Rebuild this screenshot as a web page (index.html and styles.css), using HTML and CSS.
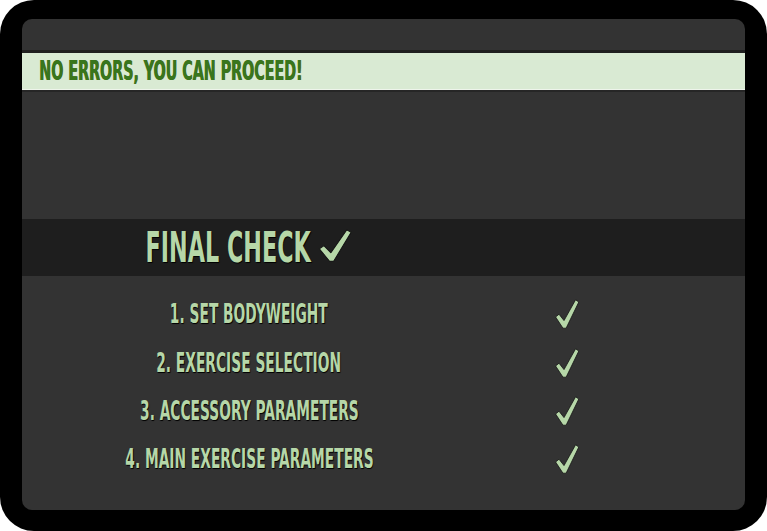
FILE: index.html
```html
<!DOCTYPE html>
<html lang="en">
<head>
  <meta charset="UTF-8">
  <title>Final Check</title>
  <link rel="stylesheet" href="styles.css">
</head>
<body>
  <div class="frame">
    <div class="panel">
      <div class="notice"><span class="squeeze">No errors, you can proceed!</span></div>

      <div class="final-head">
        <h2 class="title">
          <span>Final check</span>
          <svg class="tick tick-big" viewBox="0 0 24 30" preserveAspectRatio="none"><path d="M0.6 18 L4 15.2 L9 21.6 L20.6 0.8 L23.8 3 L11.1 29.2 L8 29.2 Z"/></svg>
        </h2>
      </div>

      <div class="checklist">
        <div class="row">
          <span class="squeeze">1. Set bodyweight</span>
          <svg class="tick" viewBox="0 0 24 30"><path d="M0.6 18 L4 15.2 L9 21.6 L20.6 0.8 L23.8 3 L11.1 29.2 L8 29.2 Z"/></svg>
        </div>
        <div class="row">
          <span class="squeeze">2. Exercise selection</span>
          <svg class="tick" viewBox="0 0 24 30"><path d="M0.6 18 L4 15.2 L9 21.6 L20.6 0.8 L23.8 3 L11.1 29.2 L8 29.2 Z"/></svg>
        </div>
        <div class="row">
          <span class="squeeze">3. Accessory parameters</span>
          <svg class="tick" viewBox="0 0 24 30"><path d="M0.6 18 L4 15.2 L9 21.6 L20.6 0.8 L23.8 3 L11.1 29.2 L8 29.2 Z"/></svg>
        </div>
        <div class="row">
          <span class="squeeze">4. Main exercise parameters</span>
          <svg class="tick" viewBox="0 0 24 30"><path d="M0.6 18 L4 15.2 L9 21.6 L20.6 0.8 L23.8 3 L11.1 29.2 L8 29.2 Z"/></svg>
        </div>
      </div>
    </div>
  </div>
</body>
</html>
```

FILE: styles.css
```css
html {
  background: #fff;
}
body {
  margin: 0;
  font-family: "DejaVu Sans Condensed", "Liberation Sans Narrow", "Liberation Sans", sans-serif;
  font-weight: bold;
  text-transform: uppercase;
}
.frame {
  width: 767px;
  height: 531px;
  box-sizing: border-box;
  padding: 19px 22px 21px;
  background: #000;
  border-radius: 34px;
}
.panel {
  height: 100%;
  padding-top: 31px;
  box-sizing: border-box;
  background: #333;
  border-radius: 10px;
  overflow: hidden;
}
/* the font is too wide, so squeeze the words to a tall condensed shape */
.squeeze {
  display: inline-block;
  transform: scaleX(0.59);
  transform-origin: center;
  white-space: nowrap;
}
.notice {
  height: 36px;
  display: flex;
  align-items: center;
  padding-left: 17px;
  background: #d9ead3;
  border-top: 3px solid #1f1f1f;
  border-bottom: 1px solid #eef4eb;
  box-shadow: 0 2px 0 #262626;
  color: #38761d;
  font-size: 26px;
  text-shadow: 1px 0 0 #5a6b1a;
}
.notice .squeeze {
  transform: scaleX(0.61);
  transform-origin: left center;
}
.final-head {
  margin-top: 129px;
  height: 57px;
  display: grid;
  grid-template-columns: 454px;
  align-items: center;
  background: #1e1e1e;
}
.title {
  margin: 0;
  justify-self: center;
  display: flex;
  align-items: center;
  gap: 13px;
  color: #b6d7a8;
  font-size: 42px;
  text-shadow: 1px 1px 1px #000;
  white-space: nowrap;
  transform: scaleX(0.59);
}
.checklist {
  padding-top: 14px;
}
.row {
  height: 48.4px;
  display: grid;
  grid-template-columns: 454px 182px;
  align-items: center;
  justify-items: center;
  color: #b6d7a8;
  font-size: 26px;
  text-shadow: 1px 1px 1px #000;
}
.tick {
  width: 24px;
  height: 30px;
  fill: #b6d7a8;
  stroke: #141414;
  stroke-width: 0.8;
  stroke-linejoin: round;
}
.tick-big {
  width: 56px;
  height: 33px;
  margin-top: -4px;
}
```
